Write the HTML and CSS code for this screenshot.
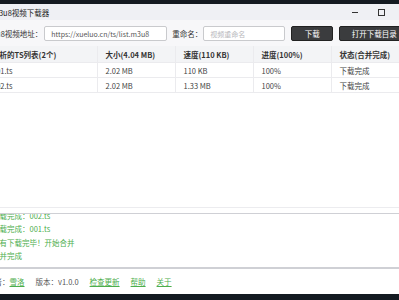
FILE: index.html
```html
<!DOCTYPE html>
<html lang="zh-CN">
<head>
  <meta charset="UTF-8" />
  <title>m3u8视频下载器</title>
  <link rel="stylesheet" href="styles.css">
</head>
<body>
  <div class="janela">
    <div class="barra-titulo">
      <span class="titulo">m3u8视频下载器</span>
      <div class="controles">
        <span class="ctrl min"></span>
        <span class="ctrl max"></span>
        <span class="ctrl fechar">✕</span>
      </div>
    </div>

    <div class="ferramentas">
      <label class="rotulo">m3u8视频地址：</label>
      <input class="campo url" type="text" value="https://xueluo.cn/ts/list.m3u8" />
      <label class="rotulo nome">重命名：</label>
      <input class="campo renomear" type="text" placeholder="视频重命名" />
      <button class="botao baixar">下载</button>
      <button class="botao abrir">打开下载目录</button>
    </div>

    <div class="tabela-box">
      <table class="tabela">
        <colgroup>
          <col class="col-ts">
          <col class="col-dado">
          <col class="col-dado">
          <col class="col-dado">
          <col>
        </colgroup>
        <thead>
          <tr>
            <th>解析的TS列表(2个)</th>
            <th>大小(4.04 MB)</th>
            <th>速度(110 KB)</th>
            <th>进度(100%)</th>
            <th>状态(合并完成)</th>
          </tr>
        </thead>
        <tbody>
          <tr>
            <td>001.ts</td>
            <td>2.02 MB</td>
            <td>110 KB</td>
            <td>100%</td>
            <td>下载完成</td>
          </tr>
          <tr>
            <td>002.ts</td>
            <td>2.02 MB</td>
            <td>1.33 MB</td>
            <td>100%</td>
            <td>下载完成</td>
          </tr>
        </tbody>
      </table>
    </div>

    <div class="log">
      <div class="log-linhas">
        <div>下载完成：002.ts</div>
        <div>下载完成：001.ts</div>
        <div>所有下载完毕！开始合并</div>
        <div>合并完成</div>
      </div>
    </div>

    <div class="rodape">
      <span>作者：<a href="#">雪洛</a></span>
      <span>版本：v1.0.0</span>
      <a href="#">检查更新</a>
      <a href="#">帮助</a>
      <a href="#">关于</a>
    </div>
  </div>
</body>
</html>
```

FILE: styles.css
```css
body {
  margin: 0;
  background-color: #141a21;
  font-family: "Noto Sans CJK SC", "Noto Sans", sans-serif;
  font-size: 7.5px;
  color: #333;
  overflow: hidden;
  height: 300px;
}

.janela {
  width: 458px;
  margin: 4px 0 0 -24px;
  background-color: #fff;
}

.barra-titulo {
  height: 16px;
  display: flex;
  align-items: center;
  justify-content: space-between;
  background-color: #eff0f4;
  padding-left: 16px;
}

.titulo {
  font-size: 7.5px;
  color: #222;
}

.controles {
  display: flex;
  height: 100%;
}

.ctrl {
  width: 26px;
  display: flex;
  align-items: center;
  justify-content: center;
}

.min::before {
  content: "";
  width: 6px;
  border-top: 1px solid #333;
}

.max::before {
  content: "";
  width: 5px;
  height: 5px;
  border: 1px solid #333;
}

.fechar {
  width: 40px;
  font-size: 8px;
}

.ferramentas {
  display: flex;
  align-items: center;
  padding: 6px 12px 5px 9px;
  background-color: #f7f7f9;
}

.rotulo {
  margin-right: 2px;
  white-space: nowrap;
}

.rotulo.nome {
  margin-left: 5px;
  margin-right: 1px;
}

.campo {
  height: 15px;
  box-sizing: border-box;
  border: 1px solid #c9cacd;
  border-radius: 2px;
  font-family: inherit;
  font-size: 7px;
  padding: 0 6px;
  color: #555;
  background-color: #fff;
}

.campo::placeholder {
  color: #b8b8bc;
}

.url {
  width: 123px;
}

.renomear {
  width: 82px;
}

.botao {
  height: 15px;
  border: 1px solid #222;
  border-radius: 2px;
  background-color: #3b3c3e;
  color: #fff;
  font-family: inherit;
  font-size: 7.5px;
  padding: 0;
  margin-left: 6px;
}

.baixar {
  width: 42px;
}

.abrir {
  width: 70px;
}

.tabela-box {
  height: 161px;
  border-bottom: 1px solid #ececef;
}

.tabela {
  border-collapse: collapse;
  table-layout: fixed;
  width: 100%;
}

.col-ts {
  width: 121px;
}

.col-dado {
  width: 78px;
}

.tabela th,
.tabela td {
  text-align: left;
  padding: 0 8px;
  white-space: nowrap;
  overflow: hidden;
  border-bottom: 1px solid #ebebee;
  border-right: 1px solid #ebebee;
}

.tabela th {
  height: 16px;
  font-weight: bold;
  background-color: #f3f4f6;
  color: #333;
}

.tabela td {
  height: 14px;
  color: #444;
}

.tabela th:first-child,
.tabela td:first-child {
  padding-left: 16px;
}

.log {
  margin-top: 5px;
  height: 53px;
  border-top: 1px solid #cfd0d5;
  border-bottom: 2px solid #cfd0d5;
  overflow: hidden;
}

.log-linhas {
  margin-top: -5px;
  padding-left: 16px;
  line-height: 13.3px;
  color: #4cae4c;
}

.rodape {
  height: 25px;
  display: flex;
  align-items: center;
  gap: 11px;
  padding-left: 11px;
  color: #555;
}

.rodape a {
  color: #4cae4c;
  text-decoration: underline;
}
```
